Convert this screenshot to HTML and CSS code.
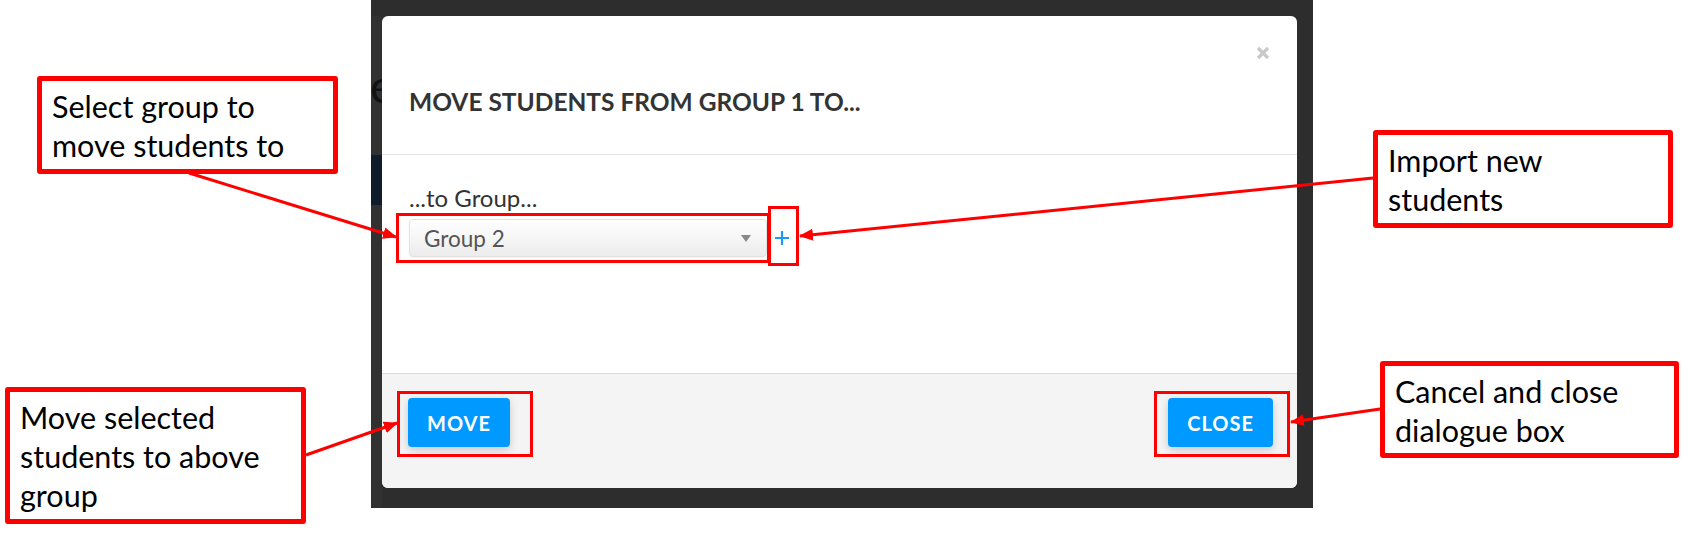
FILE: index.html
```html
<!DOCTYPE html>
<html lang="en">
<head>
    <meta charset="UTF-8">
    <meta name="viewport" content="width=device-width, initial-scale=1.0">
    <title>Move Students</title>
    <link rel="stylesheet" href="styles.css">
</head>
<body>
    <div class="page">
        <div class="backdrop">
            <div class="backdrop-edge">
                <span class="edge-letter">e</span>
                <div class="edge-band"></div>
            </div>

            <div class="modal">
                <div class="modal-header">
                    <button class="modal-close" aria-label="Close">
                        <svg width="14" height="14" viewBox="0 0 14 14">
                            <path d="M2 2 L12 12 M12 2 L2 12" stroke="#c8c8c8" stroke-width="3.2" fill="none"/>
                        </svg>
                    </button>
                    <h3 class="modal-title">Move students from Group 1 to...</h3>
                </div>

                <div class="modal-body">
                    <label class="field-label" for="targetGroup">...to Group...</label>
                    <div class="field-row">
                        <div class="select-box" id="targetGroup">
                            <span>Group 2</span>
                            <span class="select-caret"></span>
                        </div>
                        <button class="add-link" aria-label="Import new students">
                            <svg width="14" height="14" viewBox="0 0 14 14">
                                <path d="M7 0 V14 M0 7 H14" stroke="#2196f3" stroke-width="2.2" fill="none"/>
                            </svg>
                        </button>
                    </div>
                </div>

                <div class="modal-footer">
                    <button class="btn">Move</button>
                    <button class="btn">Close</button>
                </div>
            </div>
        </div>

        <!-- red annotation marks drawn over the screenshot -->
        <svg class="marks" width="1681" height="535" viewBox="0 0 1681 535">
            <defs>
                <marker id="head" markerUnits="userSpaceOnUse" markerWidth="14" markerHeight="12" refX="13" refY="6" orient="auto">
                    <path d="M0 0 L14 6 L0 12 z" fill="#ff0000"/>
                </marker>
            </defs>
            <g fill="none" stroke="#ff0000" stroke-width="3">
                <rect x="397.5" y="214.5" width="371" height="47"/>
                <rect x="769.5" y="207.5" width="28" height="57"/>
                <rect x="398.5" y="392.5" width="133" height="63"/>
                <rect x="1155.5" y="392.5" width="133" height="63"/>
            </g>
            <g stroke="#ff0000" stroke-width="3">
                <line x1="189" y1="173" x2="396" y2="237" marker-end="url(#head)"/>
                <line x1="1373" y1="178" x2="800" y2="236" marker-end="url(#head)"/>
                <line x1="306" y1="455" x2="397" y2="423" marker-end="url(#head)"/>
                <line x1="1380" y1="409" x2="1291" y2="422" marker-end="url(#head)"/>
            </g>
        </svg>

        <div class="callout callout-select">Select group to<br>move students to</div>
        <div class="callout callout-import">Import new<br>students</div>
        <div class="callout callout-move">Move selected<br>students to above<br>group</div>
        <div class="callout callout-close">Cancel and close<br>dialogue box</div>
    </div>
</body>
</html>
```

FILE: styles.css
```css
body {
    margin: 0;
    padding: 0;
    background-color: #fff;
    font-family: Lato, "Open Sans", sans-serif;
}

.page {
    position: relative;
    width: 1681px;
    height: 535px;
    overflow: hidden;
}

.backdrop {
    display: flex;
    width: 942px;
    height: 508px;
    margin-left: 371px;
    padding-top: 16px;
    box-sizing: border-box;
    background-color: #2d2d2d;
}

.backdrop-edge {
    width: 11px;
    overflow: hidden;
    background-color: #313131;
}

.edge-letter {
    display: block;
    margin: 47px 0 0 -1px;
    font-size: 46px;
    line-height: 46px;
    color: #121212;
}

.edge-band {
    height: 50px;
    margin-top: 46px;
    background-color: #0e1c2b;
}

.modal {
    display: flex;
    flex-direction: column;
    width: 915px;
    height: 472px;
    background-color: #fff;
    border-radius: 6px;
    overflow: hidden;
    color: #333;
}

.modal-header {
    display: flex;
    flex-direction: column;
    padding: 30px 27px 40px 27px;
    border-bottom: 1px solid #e5e5e5;
}

.modal-close {
    align-self: flex-end;
    width: 14px;
    height: 14px;
    padding: 0;
    border: none;
    background: none;
    line-height: 0;
}

.modal-title {
    margin: 29px 0 0;
    font-size: 24.5px;
    line-height: 25px;
    font-weight: 700;
    text-transform: uppercase;
}

.modal-body {
    flex: 1;
    padding: 30px 27px 0;
}

.field-label {
    display: block;
    font-size: 24px;
    line-height: 26px;
    color: #333;
}

.field-row {
    display: flex;
    align-items: center;
    margin-top: 8px;
}

.select-box {
    display: flex;
    align-items: center;
    justify-content: space-between;
    width: 358px;
    height: 38px;
    padding: 0 15px 0 14px;
    box-sizing: border-box;
    border: 1px solid #e2e2e2;
    border-radius: 4px;
    background: linear-gradient(#ffffff, #ececec);
    box-shadow: 0 1px 2px rgba(0, 0, 0, 0.06);
    font-size: 22.5px;
    color: #555;
}

.select-caret {
    width: 0;
    height: 0;
    border-left: 5px solid transparent;
    border-right: 5px solid transparent;
    border-top: 7px solid #888;
}

.add-link {
    margin-left: 8px;
    padding: 0;
    border: none;
    background: none;
    line-height: 0;
}

.modal-footer {
    display: flex;
    justify-content: space-between;
    align-items: flex-start;
    height: 115px;
    padding: 24px 24px 0 26px;
    box-sizing: border-box;
    border-top: 1px solid #dcdcdc;
    background-color: #f4f4f4;
}

.btn {
    height: 49px;
    padding: 0 19px;
    border: none;
    border-radius: 4px;
    background-color: #0099ff;
    color: #fff;
    font-family: Lato, "Open Sans", sans-serif;
    font-size: 20px;
    font-weight: 700;
    letter-spacing: 1px;
    text-transform: uppercase;
    box-shadow: 0 3px 8px rgba(0, 0, 0, 0.18);
}

.marks {
    position: absolute;
    top: 0;
    left: 0;
    pointer-events: none;
}

.callout {
    position: absolute;
    box-sizing: border-box;
    padding: 6px 0 0 10px;
    border: 5px solid #ff0000;
    border-radius: 3px;
    background-color: #fff;
    color: #000;
    font-family: Lato, "Open Sans", sans-serif;
    font-size: 30.5px;
    line-height: 39px;
}

.callout-select {
    left: 37px;
    top: 76px;
    width: 301px;
    height: 98px;
}

.callout-import {
    left: 1373px;
    top: 130px;
    width: 300px;
    height: 98px;
}

.callout-move {
    left: 5px;
    top: 387px;
    width: 301px;
    height: 137px;
}

.callout-close {
    left: 1380px;
    top: 361px;
    width: 299px;
    height: 97px;
}
```
